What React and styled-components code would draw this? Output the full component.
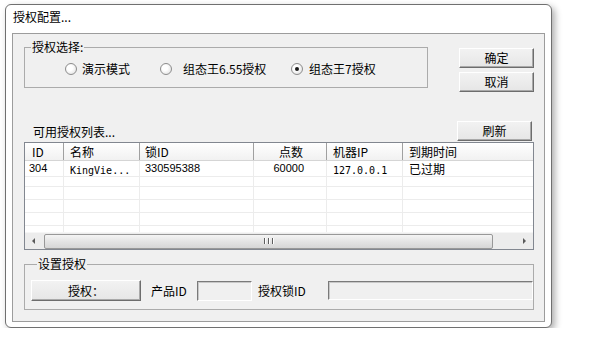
import React from 'react';
import styled, { createGlobalStyle } from 'styled-components';

const GlobalStyle = createGlobalStyle`
  html, body {
    margin: 0;
    padding: 0;
    background: #fff;
  }
  body {
    font-family: "Noto Sans CJK SC", "Liberation Sans", sans-serif;
    font-size: 12px;
    color: #000;
  }
  * {
    box-sizing: border-box;
  }
`;

const Page = styled.div`
  padding: 4px 0 0 5px;
`;

const Window = styled.div`
  width: 547px;
  height: 324px;
  border: 1px solid #707070;
  border-radius: 6px;
  background: #fff;
  box-shadow: 3px 3px 7px rgba(0, 0, 0, 0.32);
  padding: 0 6px 5px 6px;
  display: flex;
  flex-direction: column;
`;

const TitleBar = styled.div`
  height: 28px;
  padding: 5px 0 0 1px;
  line-height: 14px;
`;

const Client = styled.div`
  flex: 1;
  border: 1px solid #9c9c9c;
  background: #f0f0f0;
  padding: 6px 10px 0 11px;
  display: flex;
  flex-direction: column;
`;

const TopRow = styled.div`
  display: flex;
  align-items: flex-start;
`;

const GroupBox = styled.fieldset`
  margin: ${(p) => p.$mt || 0}px 0 0 0;
  width: ${(p) => p.$w || 'auto'};
  border: 1px solid #ababab;
  padding: ${(p) => p.$pad};
  min-width: 0;
`;

const Legend = styled.legend`
  margin-left: 6px;
  padding: 0 1px;
  line-height: 14px;
  font-size: 12px;
`;

const RadioRow = styled.div`
  display: flex;
  align-items: center;
  height: 14px;
  padding-left: 40px;
`;

const RadioItem = styled.label`
  display: flex;
  align-items: center;
  width: ${(p) => p.$w || 'auto'};
  line-height: 14px;
`;

const RadioCircle = styled.span`
  width: 12px;
  height: 12px;
  border-radius: 50%;
  border: 1px solid #8d8d8d;
  background: radial-gradient(circle at 40% 40%, #ffffff 30%, #dadada 100%);
  display: flex;
  align-items: center;
  justify-content: center;
  flex: none;

  &::after {
    content: '';
    width: 4px;
    height: 4px;
    border-radius: 50%;
    background: ${(p) => (p.$checked ? '#1a1a1a' : 'transparent')};
  }
`;

const RadioText = styled.span`
  margin-left: ${(p) => p.$gap}px;
  white-space: nowrap;
`;

const ButtonColumn = styled.div`
  display: flex;
  flex-direction: column;
  gap: 4px;
  margin: 8px 0 0 31px;
`;

const Button = styled.button`
  width: ${(p) => p.$w || 75}px;
  height: ${(p) => p.$h || 20}px;
  padding: 0;
  font-family: inherit;
  font-size: 12px;
  line-height: 14px;
  color: #000;
  background: linear-gradient(#f2f2f2, #e6e6e6);
  border: 1px solid;
  border-color: #ffffff #6d6d6d #6d6d6d #ffffff;
  box-shadow: inset -1px -1px 0 #a9a9a9;
  flex: none;
`;

const ListHeader = styled.div`
  display: flex;
  align-items: center;
  justify-content: space-between;
  margin-top: 29px;
  height: 20px;
  padding: 0 2px 0 9px;
`;

const Table = styled.div`
  margin-top: 1px;
  height: 108px;
  border: 1px solid #828790;
  background: #fff;
  display: flex;
  flex-direction: column;
`;

const columns = '39px 76px 114px 73px 76px 1fr';

const HeaderRow = styled.div`
  display: grid;
  grid-template-columns: ${columns};
  height: 18px;
  background: linear-gradient(#ffffff, #f1f1f1);
  border-bottom: 1px solid #d5d5d5;
`;

const HeaderCell = styled.div`
  border-right: 1px solid #a0a0a0;
  line-height: 15px;
  padding: ${(p) => (p.$right ? '1px 23px 0 0' : `1px 0 0 ${p.$pl || 5}px`)};
  text-align: ${(p) => (p.$right ? 'right' : 'left')};
  white-space: nowrap;
  &:last-child {
    border-right: none;
  }
`;

const Body = styled.div`
  height: 71px;
  overflow: hidden;
`;

const Row = styled.div`
  display: grid;
  grid-template-columns: ${columns};
  height: 13px;
`;

const Cell = styled.div`
  box-shadow: inset -1px -1px 0 #ececec;
  line-height: 13px;
  font-family: ${(p) => (p.$num ? '"Liberation Sans", sans-serif' : 'inherit')};
  font-size: ${(p) => (p.$num ? '11px' : '12px')};
  padding: ${(p) => (p.$right ? '1px 23px 0 0' : `1px 0 0 ${p.$pl || 5}px`)};
  text-align: ${(p) => (p.$right ? 'right' : 'left')};
  white-space: nowrap;
  &:last-child {
    box-shadow: inset 0 -1px 0 #ececec;
  }
`;

const Mono = styled.span`
  font-family: "DejaVu Sans Mono", monospace;
  font-size: 10px;
`;

const ScrollBar = styled.div`
  height: 17px;
  display: flex;
  align-items: center;
  background: #ececec;
  border-top: 1px solid #f6f6f6;
`;

const ArrowBox = styled.div`
  width: 17px;
  height: 16px;
  display: flex;
  align-items: center;
  justify-content: center;
  flex: none;

  &::before {
    content: '';
    border-top: 3px solid transparent;
    border-bottom: 3px solid transparent;
    ${(p) => (p.$dir === 'left' ? 'border-right: 3px solid #5a5a5a;' : 'border-left: 3px solid #5a5a5a;')}
  }
`;

const Thumb = styled.div`
  margin-left: 2px;
  width: 449px;
  height: 15px;
  border: 1px solid #989898;
  border-radius: 2px;
  background: linear-gradient(#f4f4f4, #e4e4e4 50%, #d6d6d6);
  display: flex;
  align-items: center;
  justify-content: center;
  gap: 1px;
`;

const GripLine = styled.span`
  width: 1px;
  height: 6px;
  background: #5e5e5e;
  box-shadow: 1px 0 0 #fff;
  margin: 0 1px;
`;

const Track = styled.div`
  flex: 1;
`;

const SetRow = styled.div`
  display: flex;
  align-items: center;
  height: 21px;
`;

const FieldLabel = styled.span`
  width: ${(p) => p.$w}px;
  margin-left: ${(p) => p.$ml}px;
  white-space: nowrap;
  line-height: 14px;
  flex: none;
`;

const Input = styled.div`
  width: ${(p) => (p.$w ? `${p.$w}px` : 'auto')};
  flex: ${(p) => (p.$w ? 'none' : 1)};
  height: ${(p) => p.$h}px;
  background: #f0f0f0;
  border: 1px solid;
  border-color: #7a7a7a #ffffff #ffffff #7a7a7a;
  box-shadow: inset 1px 1px 0 #c8c8c8;
`;

const headers = [
  { label: 'ID', pl: 7 },
  { label: '名称', pl: 6 },
  { label: '锁ID', pl: 5 },
  { label: '点数', right: true },
  { label: '机器IP', pl: 6 },
  { label: '到期时间', pl: 6 },
];

export default function App() {
  const emptyRows = [1, 2, 3, 4, 5];
  return (
    <Page>
      <GlobalStyle />
      <Window>
        <TitleBar>授权配置...</TitleBar>
        <Client>
          <TopRow>
            <GroupBox $w="404px" $pad="8px 0 11px 0">
              <Legend>授权选择:</Legend>
              <RadioRow>
                <RadioItem $w="95px">
                  <RadioCircle />
                  <RadioText $gap={5}>演示模式</RadioText>
                </RadioItem>
                <RadioItem $w="131px">
                  <RadioCircle />
                  <RadioText $gap={11}>组态王6.55授权</RadioText>
                </RadioItem>
                <RadioItem>
                  <RadioCircle $checked />
                  <RadioText $gap={6}>组态王7授权</RadioText>
                </RadioItem>
              </RadioRow>
            </GroupBox>
            <ButtonColumn>
              <Button>确定</Button>
              <Button>取消</Button>
            </ButtonColumn>
          </TopRow>

          <ListHeader>
            <span>可用授权列表...</span>
            <Button>刷新</Button>
          </ListHeader>

          <Table>
            <HeaderRow>
              {headers.map((h) => (
                <HeaderCell key={h.label} $pl={h.pl} $right={h.right}>
                  {h.label}
                </HeaderCell>
              ))}
            </HeaderRow>
            <Body>
              <Row>
                <Cell $pl={4} $num>304</Cell>
                <Cell $pl={6}><Mono>KingVie...</Mono></Cell>
                <Cell $pl={5} $num>330595388</Cell>
                <Cell $right $num>60000</Cell>
                <Cell $pl={6}><Mono>127.0.0.1</Mono></Cell>
                <Cell $pl={6}>已过期</Cell>
              </Row>
              {emptyRows.map((r) => (
                <Row key={r}>
                  {headers.map((h) => (
                    <Cell key={h.label} />
                  ))}
                </Row>
              ))}
            </Body>
            <ScrollBar>
              <ArrowBox $dir="left" />
              <Thumb>
                <GripLine />
                <GripLine />
                <GripLine />
              </Thumb>
              <Track />
              <ArrowBox $dir="right" />
            </ScrollBar>
          </Table>

          <GroupBox $mt={7} $pad="9px 0 8px 6px">
            <Legend>设置授权</Legend>
            <SetRow>
              <Button $w={110} $h={21}>授权：</Button>
              <FieldLabel $w={46} $ml={10}>产品ID</FieldLabel>
              <Input $w={55} $h={20} />
              <FieldLabel $w={70} $ml={6}>授权锁ID</FieldLabel>
              <Input $h={19} />
            </SetRow>
          </GroupBox>
        </Client>
      </Window>
    </Page>
  );
}
